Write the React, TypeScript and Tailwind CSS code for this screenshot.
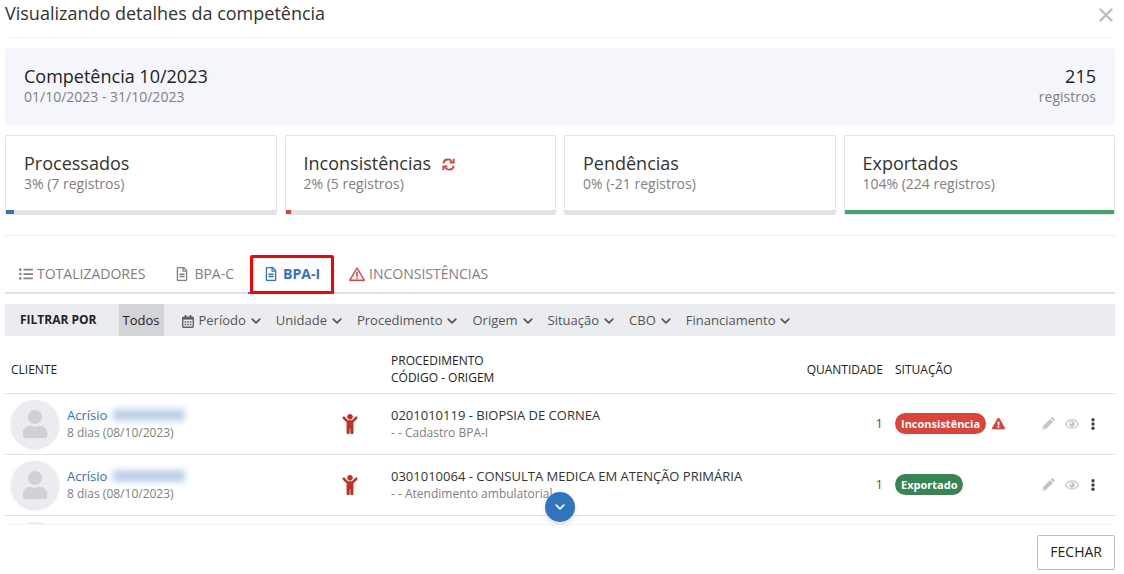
import React, { useState } from 'react';
import {
  FaChild,
  FaExclamationTriangle,
  FaListUl,
  FaRegFileAlt,
  FaUser,
} from 'react-icons/fa';
import clsx from 'clsx';

const WarningOutline: React.FC = () => (
  <svg viewBox="0 0 16 14" className="h-[14px] w-4" fill="none" stroke="#dd4338" strokeWidth="1.4" strokeLinejoin="round">
    <path d="M8 1 L15.2 13.2 H0.8 Z" />
    <path d="M8 5.2 V9" strokeLinecap="round" strokeWidth="1.6" />
    <path d="M8 11 V11.3" strokeLinecap="round" strokeWidth="1.6" />
  </svg>
);

const RefreshIcon: React.FC = () => (
  <svg viewBox="0 0 14 14" className="h-[13px] w-[13px]" fill="none" stroke="#dd4338" strokeWidth="2" strokeLinejoin="miter">
    <path d="M1.4 5.9 A5 5 0 0 1 10.8 4.2" />
    <path d="M12.6 0.8 V5 H8.2" />
    <path d="M12.6 8.1 A5 5 0 0 1 3.2 9.8" />
    <path d="M1.4 13.2 V9 H5.8" />
  </svg>
);

const CalendarIcon: React.FC = () => (
  <svg viewBox="0 0 12 13" className="h-[13px] w-3" fill="none" stroke="#665d64">
    <rect x="0.7" y="2.2" width="10.6" height="10.1" rx="1" strokeWidth="1.4" />
    <path d="M0.7 3.4 H11.3" strokeWidth="2.4" />
    <path d="M3.5 0 V3 M8.5 0 V3" strokeWidth="1.6" />
    <path d="M2.6 7 H9.4 M2.6 9.6 H9.4" strokeWidth="1.5" strokeDasharray="1.6 1" />
  </svg>
);

const PencilIcon: React.FC = () => (
  <svg viewBox="0 0 13 13" className="h-[13px] w-[13px]" fill="currentColor">
    <path d="M0.4 12.6 L1.1 9.1 L8.1 2.1 L10.9 4.9 L3.9 11.9 Z" />
    <path d="M8.8 1.4 L9.7 0.6 Q10.4 0 11.1 0.6 L12.4 1.9 Q13 2.6 12.4 3.3 L11.6 4.2 Z" />
    <path d="M1.6 10.1 L2.9 11.4" stroke="#fff" strokeWidth="0.6" />
  </svg>
);

const EyeIcon: React.FC = () => (
  <svg viewBox="0 0 14 10" className="h-[10px] w-[14px]" fill="none" stroke="currentColor">
    <path d="M0.7 5 C3.4 -0.4 10.6 -0.4 13.3 5 C10.6 10.4 3.4 10.4 0.7 5 Z" strokeWidth="1.2" />
    <circle cx="7" cy="5" r="2.7" fill="currentColor" stroke="none" />
    <circle cx="6.2" cy="4.2" r="0.9" fill="#fff" stroke="none" />
  </svg>
);

const DotsIcon: React.FC = () => (
  <svg viewBox="0 0 4 12" className="h-3 w-1" fill="currentColor">
    <circle cx="2" cy="1.8" r="1.7" />
    <circle cx="2" cy="6" r="1.7" />
    <circle cx="2" cy="10.2" r="1.7" />
  </svg>
);

const Chevron: React.FC<{ className?: string }> = ({ className }) => (
  <svg viewBox="0 0 10 6" className={clsx('h-[6px] w-[10px]', className)} fill="none" stroke="currentColor" strokeWidth="1.7" strokeLinecap="round" strokeLinejoin="round">
    <path d="M1.2 1.1 L5 4.8 L8.8 1.1" />
  </svg>
);

const cards = [
  { title: 'Processados', detail: '3% (7 registros)', percent: 3, bar: 'bg-[#3273bd]' },
  { title: 'Inconsistências', detail: '2% (5 registros)', percent: 2, bar: 'bg-[#dd4338]', refresh: true },
  { title: 'Pendências', detail: '0% (-21 registros)', percent: 0, bar: 'bg-[#3273bd]' },
  { title: 'Exportados', detail: '104% (224 registros)', percent: 100, bar: 'bg-[#45a56b]' },
];

const tabs = [
  { label: 'TOTALIZADORES', icon: <FaListUl size={14} />, box: 'w-[15px]' },
  { label: 'BPA-C', icon: <FaRegFileAlt size={14} />, box: 'w-[18px] justify-center' },
  { label: 'BPA-I', icon: <FaRegFileAlt size={14} />, box: 'w-[18px] justify-center' },
  { label: 'INCONSISTÊNCIAS', icon: <WarningOutline />, box: 'w-[18px] justify-center' },
];

const filters = ['Período', 'Unidade', 'Procedimento', 'Origem', 'Situação', 'CBO', 'Financiamento'];

const rows = [
  { code: '0201010119 - BIOPSIA DE CORNEA', origin: '- - Cadastro BPA-I', status: 'Inconsistência' },
  { code: '0301010064 - CONSULTA MEDICA EM ATENÇÃO PRIMÁRIA', origin: '- - Atendimento ambulatorial', status: 'Exportado' },
];

const Avatar: React.FC = () => (
  <div className="flex h-12 w-12 items-center justify-center rounded-full bg-[#ebecf0] text-[#d0d1d3] shadow">
    <FaUser size={28} />
  </div>
);

const StatusBadge: React.FC<{ status: string }> = ({ status }) => {
  const failed = status === 'Inconsistência';
  return (
    <div className="flex items-center gap-1.5">
      <span
        className={clsx(
          'rounded-full px-1.5 text-[11px] leading-[21px] font-bold text-white',
          failed ? 'bg-[#dd4338]' : 'bg-[#388455]'
        )}
      >
        {status}
      </span>
      {failed && <FaExclamationTriangle size={13} className="text-[#dd4338]" />}
    </div>
  );
};

export default function App() {
  const [activeTab, setActiveTab] = useState('BPA-I');

  return (
    <div className="flex h-screen flex-col bg-white pr-[9px] pl-[5px] font-['Open_Sans',sans-serif] text-[#333]">
      <header className="flex h-[38px] shrink-0 items-start justify-between border-b border-[#f5f5f5]">
        <h1 className="text-lg leading-[26px]">Visualizando detalhes da competência</h1>
        <button type="button" aria-label="Fechar janela" className="mt-2 mr-0.5">
          <svg viewBox="0 0 14 14" className="h-[14px] w-[14px]" fill="none" stroke="#bdbdbd" strokeWidth="2.4" strokeLinecap="round">
            <path d="M1.5 1.5 L12.5 12.5 M12.5 1.5 L1.5 12.5" />
          </svg>
        </button>
      </header>

      <main className="relative min-h-0 flex-1">
        <div className="h-full overflow-hidden pt-2.5">
          {/* Summary */}
          <section className="flex justify-between rounded-xs bg-[#f5f6fb] px-[19px] pt-[17px] pb-[18px]">
            <div>
              <h2 className="text-lg leading-[22px] text-[#222]">Competência 10/2023</h2>
              <p className="text-sm text-[#808080]">01/10/2023 - 31/10/2023</p>
            </div>
            <div className="text-right">
              <p className="text-lg leading-[22px] text-[#222]">215</p>
              <p className="text-sm text-[#808080]">registros</p>
            </div>
          </section>

          {/* Status cards */}
          <section className="mt-2.5 grid grid-cols-4 gap-2 border-b border-[#eee] pb-5">
            {cards.map((card) => (
              <article key={card.title} className="rounded-xs border border-[#e1e3e5] pt-4">
                <div className="px-[18px] pb-4">
                  <h2 className="flex items-center gap-[11px] text-lg leading-[22px]">
                    {card.title}
                    {card.refresh && (
                      <button type="button" aria-label="Reprocessar" className="pt-0.5">
                        <RefreshIcon />
                      </button>
                    )}
                  </h2>
                  <p className="text-sm text-[#808080]">{card.detail}</p>
                </div>
                <div className="h-1 bg-[#e1e3e5]">
                  <div className={clsx('h-full', card.bar)} style={{ width: `${card.percent}%` }} />
                </div>
              </article>
            ))}
          </section>

          {/* Tabs */}
          <nav className="mt-[19px] flex border-b-2 border-[#e1e1e6]">
            {tabs.map((tab) => {
              const active = tab.label === activeTab;
              return (
                <button
                  key={tab.label}
                  type="button"
                  onClick={() => setActiveTab(tab.label)}
                  className={clsx(
                    'relative -mb-0.5 flex h-[39px] items-center gap-[3px] border-b-2 px-3.5 text-sm',
                    active ? 'border-[#3273bd] font-bold text-[#3273bd]' : 'border-transparent text-[#808080]'
                  )}
                >
                  <span className={clsx('flex', tab.box)}>{tab.icon}</span>
                  {tab.label}
                  {active && <span className="absolute top-0 right-0 -bottom-0.5 left-0.5 rounded-xs border-3 border-[#fe0000]" />}
                </button>
              );
            })}
          </nav>

          {/* Filters */}
          <div className="mt-2.5 flex h-8 items-center bg-[#ebecf0] pl-[15px] text-[13px] text-[#555]">
            <span className="text-xs font-bold text-[#222]">FILTRAR POR</span>
            <button type="button" className="ml-[22px] h-full bg-[#d3d4d8] px-1 pt-0.5 text-[#222]">
              Todos
            </button>
            <div className="ml-[18px] flex gap-[15px] pt-0.5">
              {filters.map((filter) => (
                <button key={filter} type="button" className="flex items-center gap-[5px]">
                  {filter === 'Período' && <CalendarIcon />}
                  {filter}
                  <Chevron />
                </button>
              ))}
            </div>
          </div>

          {/* Records */}
          <table className="w-full table-fixed text-left">
            <colgroup>
              <col className="w-[310px]" />
              <col className="w-[70px]" />
              <col />
              <col className="w-[90px]" />
              <col className="w-[140px]" />
              <col className="w-[86px]" />
            </colgroup>
            <thead>
              <tr className="h-[57px] border-b border-[#e1e1e1] text-xs leading-[17px] text-[#222]">
                <th className="px-1.5 pt-2.5 font-medium">CLIENTE</th>
                <th />
                <th className="px-1.5 pt-2.5 font-medium">
                  PROCEDIMENTO
                  <br />
                  CÓDIGO - ORIGEM
                </th>
                <th className="px-1.5 pt-2.5 text-right font-medium">QUANTIDADE</th>
                <th className="px-1.5 pt-2.5 font-medium">SITUAÇÃO</th>
                <th />
              </tr>
            </thead>
            <tbody>
              {rows.map((row) => (
                <tr key={row.code} className="h-[61px] border-b border-[#e1e1e1]">
                  <td className="px-1.5">
                    <div className="flex items-center gap-2">
                      <Avatar />
                      <div className="text-xs leading-[17px] text-[#808080]">
                        <div className="flex items-center gap-1.5">
                          <a href="#cliente" className="text-[13px] text-[#3273bd]">
                            Acrísio
                          </a>
                          <span className="h-3 w-[72px] rounded-xs bg-[#bdd0e9] blur-[3px]" />
                        </div>
                        8 dias (08/10/2023)
                      </div>
                    </div>
                  </td>
                  <td>
                    <FaChild size={20} className="mx-auto text-[#bf3025]" />
                  </td>
                  <td className="px-1.5 text-xs leading-[17px] whitespace-nowrap text-[#808080]">
                    <p className="text-[13px] text-[#333]">{row.code}</p>
                    <p>{row.origin}</p>
                  </td>
                  <td className="px-1.5 text-right text-[13px] text-[#555]">1</td>
                  <td className="px-1.5">
                    <StatusBadge status={row.status} />
                  </td>
                  <td>
                    <div className="flex items-center justify-end gap-2.5 pr-5 text-[#c4c4c4]">
                      <button type="button" aria-label="Editar">
                        <PencilIcon />
                      </button>
                      <button type="button" aria-label="Visualizar">
                        <EyeIcon />
                      </button>
                      <button type="button" aria-label="Mais opções" className="pl-0.5 text-[#444]">
                        <DotsIcon />
                      </button>
                    </div>
                  </td>
                </tr>
              ))}
              {/* Next record, still loading */}
              <tr className="h-[61px]">
                <td className="px-1.5" colSpan={6}>
                  <Avatar />
                </td>
              </tr>
            </tbody>
          </table>
        </div>

        <button
          type="button"
          aria-label="Rolar para baixo"
          className="absolute bottom-0.5 left-1/2 flex h-[30px] w-[30px] -translate-x-1/2 items-center justify-center rounded-full bg-[#3273bd] text-white shadow-md"
        >
          <Chevron />
        </button>
      </main>

      <footer className="flex shrink-0 justify-end border-t border-[#f5f5f5] pt-2.5 pb-1">
        <button type="button" className="h-[35px] rounded-xs border border-[#bbb] px-3 pb-0.5 text-sm text-[#222]">
          FECHAR
        </button>
      </footer>
    </div>
  );
}
